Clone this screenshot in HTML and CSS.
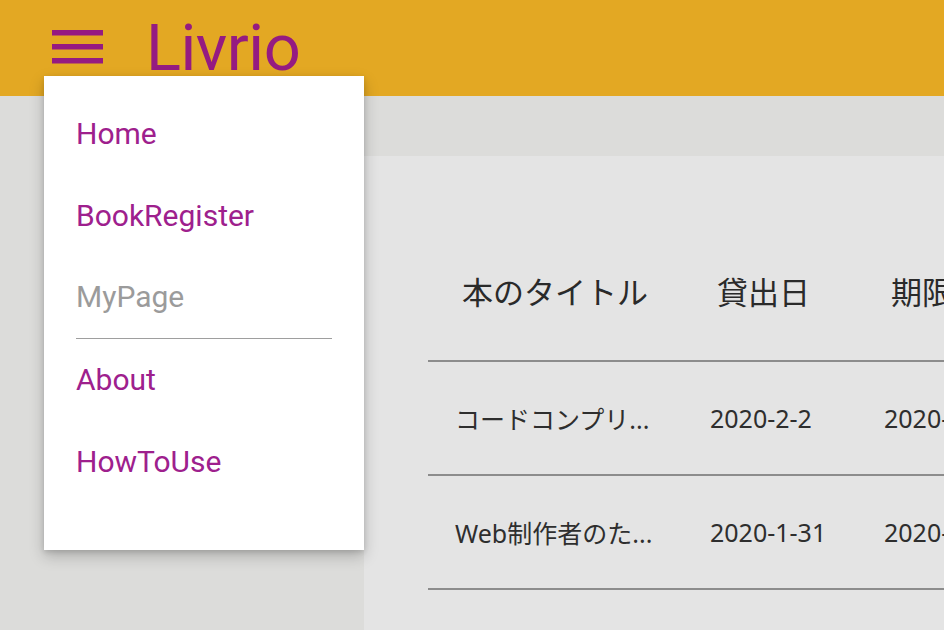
FILE: index.html
```html
<!DOCTYPE html>
<html lang="ja">
<head>
<meta charset="utf-8">
<title>Livrio</title>
<link rel="stylesheet" href="styles.css">
</head>
<body>
<header class="appbar">
  <svg class="burger" width="51" height="34" viewBox="0 0 51 34" aria-hidden="true">
    <rect x="0" y="0" width="51" height="5.5" fill="#951b81"/>
    <rect x="0" y="14" width="51" height="5.5" fill="#951b81"/>
    <rect x="0" y="28" width="51" height="5.5" fill="#951b81"/>
  </svg>
  <h1 class="brand">Livrio</h1>
</header>

<div class="main">
  <aside class="side"></aside>
  <section class="panel">
    <table class="books">
      <colgroup>
        <col class="c1"><col class="c2"><col class="c3">
      </colgroup>
      <thead>
        <tr><th>本のタイトル</th><th>貸出日</th><th>期限日</th></tr>
      </thead>
      <tbody>
        <tr><td>コードコンプリ...</td><td>2020-2-2</td><td>2020-2-16</td></tr>
        <tr><td>Web制作者のた...</td><td>2020-1-31</td><td>2020-2-14</td></tr>
      </tbody>
    </table>
  </section>
</div>

<nav class="menu">
  <a class="item">Home</a>
  <a class="item">BookRegister</a>
  <a class="item current">MyPage</a>
  <a class="item">About</a>
  <a class="item">HowToUse</a>
</nav>
</body>
</html>
```

FILE: styles.css
```css
html, body {
  margin: 0;
  padding: 0;
  height: 100%;
  overflow: hidden;
}
body {
  background: #dcdcda;
  font-family: Roboto, "Noto Sans", "Noto Sans CJK JP", sans-serif;
  position: relative;
}
.appbar {
  height: 96px;
  background: #e3a823;
  display: flex;
  align-items: center;
  padding-left: 52px;
  gap: 43px;
  box-sizing: border-box;
}
.burger {
  display: block;
  margin-top: -3px;
}
.brand {
  margin: 0;
  font-family: Roboto, sans-serif;
  font-weight: 400;
  font-size: 65px;
  line-height: 1;
  color: #951b81;
  letter-spacing: -0.5px;
}
.main {
  display: flex;
  height: calc(100% - 96px);
}
.side {
  width: 364px;
  flex: none;
}
.panel {
  flex: 1;
  margin-top: 60px;
  background: #e4e4e4;
  padding: 64px 0 0 64px;
  overflow: hidden;
}
.books {
  border-collapse: collapse;
  table-layout: fixed;
  width: 720px;
  font-family: "Noto Sans", "Noto Sans CJK JP", sans-serif;
  color: #2e2e2e;
}
.c1 { width: 255px; }
.c2 { width: 174px; }
.c3 { width: 291px; }
.books th {
  height: 141px;
  box-sizing: border-box;
  padding: 0 0 0 34px;
  text-align: left;
  font-weight: 400;
  font-size: 31px;
  font-family: "Noto Sans CJK JP", "Noto Sans", sans-serif;
  color: #2a2a2a;
  border-bottom: 2px solid #8c8c8c;
  white-space: nowrap;
}
.books td {
  height: 114px;
  box-sizing: border-box;
  padding: 0 0 0 27px;
  font-size: 25px;
  border-bottom: 2px solid #8c8c8c;
  white-space: nowrap;
}
.menu {
  position: absolute;
  left: 44px;
  top: 76px;
  width: 320px;
  box-sizing: border-box;
  padding: 17px 32px 47px 32px;
  background: #fff;
  box-shadow: 0 6px 14px rgba(0, 0, 0, 0.22), 0 2px 5px rgba(0, 0, 0, 0.12);
  display: flex;
  flex-direction: column;
}
.item {
  display: block;
  height: 82px;
  line-height: 82px;
  font-size: 30px;
  color: #9e208d;
  box-sizing: border-box;
  white-space: nowrap;
}
.item.current {
  color: #9b9b9b;
  border-bottom: 1.5px solid #9e9e9e;
  line-height: 80px;
}
```
